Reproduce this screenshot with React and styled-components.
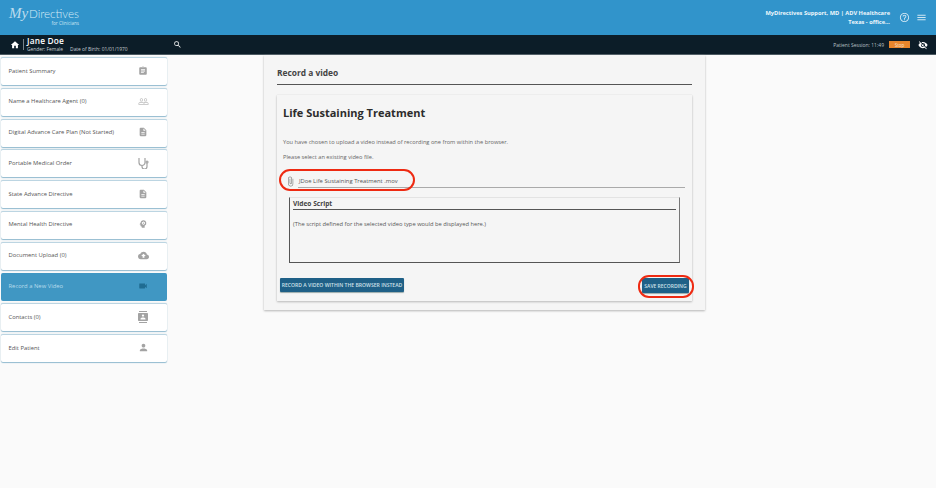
import React from "react";
import styled, { createGlobalStyle } from "styled-components";
import {
  MdAssignment, MdPeopleOutline, MdDescription, MdCloudUpload, MdVideocam, MdContacts,
  MdPerson, MdHome, MdSearch, MdHelpOutline, MdMenu, MdVisibilityOff, MdAttachFile, MdPsychology,
} from "react-icons/md";

const Global = createGlobalStyle`
  html, body { margin: 0; padding: 0; background: #fafafa; }
  body { font-family: "Open Sans", "Liberation Sans", sans-serif; width: 936px; height: 488px; overflow: hidden; }
`;

const Header = styled.header`
  height: 35px; background: #3194cb; display: flex; align-items: center; justify-content: space-between;
  padding: 0 9px 0 10px; box-sizing: border-box; color: #fff;
`;
const Logo = styled.div`display: flex; flex-direction: column; align-items: flex-end; width: 69px; margin-top: -3px; color: #d8ecf7;`;
const LogoMain = styled.div`display: flex; align-items: baseline; font-size: 11.6px; line-height: 13px; font-family: "Lato", sans-serif; font-weight: 300; white-space: nowrap;`;
const LogoScript = styled.span`font-family: "Liberation Serif", serif; font-style: italic; font-size: 15px; margin-right: 1px; color: #bcdcee;`;
const LogoSub = styled.div`font-size: 4.6px; line-height: 6px; white-space: nowrap; color: #cde5f3;`;
const UserArea = styled.div`display: flex; align-items: center; gap: 6px;`;
const UserText = styled.div`text-align: right; font-size: 5.7px; line-height: 8.5px; font-weight: 700; color: #eef7fc; margin-right: 3px;`;
const HeadIcon = styled.span`display: flex; color: #cfe6f3; font-size: ${p => p.$size || 11}px;`;

const PatientBar = styled.div`
  height: 20px; background: #0c1d28; display: flex; align-items: center; color: #fff; padding: 0 8px 0 10px;
  box-sizing: border-box; border-bottom: 1px solid #4c5a62;
`;
const HomeBtn = styled.span`display: flex; font-size: 10px; padding-right: 2px; margin-right: 1px;`;
const Divider = styled.span`width: 1px; height: 11px; background: #77838a; margin-right: 3px;`;
const Patient = styled.div`display: flex; flex-direction: column; width: 142px;`;
const PatientName = styled.div`font-size: 8.3px; line-height: 8px; font-weight: 600; letter-spacing: 0.2px;`;
const PatientMeta = styled.div`font-size: 4.9px; line-height: 6px; color: #c5ccd0; white-space: nowrap; display: flex; gap: 7px; margin-top: 1px;`;
const SearchIcon = styled.span`display: flex; font-size: 9px; margin-left: 4px;`;
const Session = styled.div`margin-left: auto; display: flex; align-items: center; gap: 5px; font-size: 5px; color: #b9c1c6;`;
const Stop = styled.span`
  width: 21px; height: 7px; background: #e8862c; color: #f9e4cf; font-size: 4.6px; display: flex; align-items: center; justify-content: center;
`;
const EyeIcon = styled.span`display: flex; font-size: 10px; color: #fff; margin-left: 3px;`;

const Body = styled.div`display: flex; align-items: flex-start;`;
const Sidebar = styled.nav`width: 166px; margin: 2px 0 0 1px; display: flex; flex-direction: column; gap: 2.8px; flex: none;`;
const Item = styled.div`
  height: 28px; box-sizing: border-box; display: flex; align-items: center; justify-content: space-between;
  padding: 0 18px 2px 7.5px; background: ${p => (p.$active ? "#4097c3" : "#fff")}; color: ${p => (p.$active ? "#b9dbec" : "#555")};
  border-radius: 2px; font-size: 5.85px; box-shadow: ${p => (p.$active ? "none" : "0 0 1px #a8c5d5, 0 1px 1px #8fb9cf")};
  border-top: 1px solid ${p => (p.$active ? "#4097c3" : "#bcd5e2")};
`;
const ItemIcon = styled.span`
  display: flex; width: 12px; justify-content: center; font-size: ${p => p.$size || 10}px; color: ${p => (p.$active ? "#1f6c92" : p.$soft ? "#bdbdbd" : "#a3a3a3")};
`;

const Panel = styled.main`
  width: 441px; height: 255px; margin-left: 97px; box-sizing: border-box; background: #f5f5f5; padding: 13px 13px 0 13px;
  box-shadow: 0 1px 2px #b5b5b5; flex: none;
`;
const PanelTitle = styled.div`
  font-size: 8.4px; font-weight: 700; color: #444; line-height: 10px; padding-bottom: 6px; border-bottom: 1px solid #555; height: 10px;
`;
const Card = styled.section`
  margin-top: 10px; height: 206px; box-sizing: border-box; padding: 9px 3px 0 6px; background: #f5f5f5; box-shadow: 0 1px 2px #b9b9b9, 0 0 1px #e2e2e2;
  display: flex; flex-direction: column; position: relative;
`;
const CardTitle = styled.h2`margin: 0; font-size: 11px; line-height: 17px; color: #2c2c2c; font-weight: 700;`;
const Para = styled.p`margin: 17px 0 0; font-size: 5.68px; line-height: 8px; color: #666; & + & { margin-top: 7px; }`;
const Field = styled.div`display: flex; align-items: center; margin-top: 13px; margin-right: 4px; height: 14px;`;
const ClipIcon = styled.span`display: flex; font-size: 11px; color: #888; width: 15px; justify-content: center;`;
const FieldText = styled.div`
  flex: 1; font-size: 5.85px; color: #555; line-height: 12px; border-bottom: 1px solid #aaa; height: 13px; box-sizing: border-box; padding-left: 1px;
`;
const ScriptBox = styled.div`
  margin: 9px 9px 0 6px; height: 66px; box-sizing: border-box; border: 1px solid #555; border-top: 1px solid #e3e3e3; border-right-color: #777; padding: 0 3px;
`;
const ScriptTitle = styled.div`font-size: 6.6px; font-weight: 700; line-height: 11px; height: 12px; box-sizing: border-box; color: #444; border-bottom: 1px solid #555;`;
const ScriptText = styled.p`margin: 10px 0 0; font-size: 5.78px; line-height: 8px; color: #555;`;
const Actions = styled.div`display: flex; justify-content: space-between; align-items: center; margin: 13px 0 0 -3px;`;
const Btn = styled.button`
  height: ${p => p.$h}px; width: ${p => p.$w}px; background: #1f6087; color: #cfe0ea; border: none; border-radius: 1px; padding: 0;
  font-family: inherit; font-size: ${p => p.$fs}px; font-weight: 600; white-space: nowrap; box-shadow: 0 1px 1px #9aa;
  margin-top: ${p => p.$mt || 0}px;
`;
const Highlight = styled.div`
  position: absolute; box-sizing: border-box; border: 2px solid #ee2a12; pointer-events: none; border-radius: 11px;
  left: ${p => p.$l}px; top: ${p => p.$t}px; width: ${p => p.$w}px; height: ${p => p.$h}px;
`;

const Scope = () => (
  <svg width="11" height="12" viewBox="0 0 11 12" fill="none" stroke="currentColor" strokeWidth="1.2">
    <path d="M1 1v4.5a3 3 0 0 0 6 0V1" />
    <path d="M4 8.5v1a1.5 1.5 0 0 0 5 0V6" />
    <circle cx="9" cy="5" r="1" />
  </svg>
);

const items = [
  ["Patient Summary", <MdAssignment />, 10],
  ["Name a Healthcare Agent (0)", <MdPeopleOutline />, 11, false, true],
  ["Digital Advance Care Plan (Not Started)", <MdDescription />, 10],
  ["Portable Medical Order", <Scope />, 11],
  ["State Advance Directive", <MdDescription />, 10],
  ["Mental Health Directive", <MdPsychology />, 10],
  ["Document Upload (0)", <MdCloudUpload />, 11],
  ["Record a New Video", <MdVideocam />, 10, true],
  ["Contacts (0)", <MdContacts />, 12],
  ["Edit Patient", <MdPerson />, 11],
];

export default function App() {
  return (
    <>
      <Global />
      <Header>
        <Logo>
          <LogoMain><LogoScript>My</LogoScript>Directives</LogoMain>
          <LogoSub>for Clinicians</LogoSub>
        </Logo>
        <UserArea>
          <UserText>
            MyDirectives Support, MD | ADV Healthcare<br />Texas - office...
          </UserText>
          <HeadIcon $size={11}><MdHelpOutline /></HeadIcon>
          <HeadIcon $size={11}><MdMenu /></HeadIcon>
        </UserArea>
      </Header>
      <PatientBar>
        <HomeBtn><MdHome /></HomeBtn>
        <Divider />
        <Patient>
          <PatientName>Jane Doe</PatientName>
          <PatientMeta><span>Gender: Female</span><span>Date of Birth: 01/01/1970</span></PatientMeta>
        </Patient>
        <SearchIcon><MdSearch /></SearchIcon>
        <Session>
          Patient Session: 11:49
          <Stop>Stop</Stop>
          <EyeIcon><MdVisibilityOff /></EyeIcon>
        </Session>
      </PatientBar>
      <Body>
        <Sidebar>
          {items.map(([label, icon, size, active, soft]) => (
            <Item key={label} $active={active}>
              {label}
              <ItemIcon $size={size} $active={active} $soft={soft}>{icon}</ItemIcon>
            </Item>
          ))}
        </Sidebar>
        <Panel>
          <PanelTitle>Record a video</PanelTitle>
          <Card>
            <CardTitle>Life Sustaining Treatment</CardTitle>
            <Para>You have chosen to upload a video instead of recording one from within the browser.</Para>
            <Para>Please select an existing video file.</Para>
            <Field>
              <ClipIcon><MdAttachFile /></ClipIcon>
              <FieldText>JDoe Life Sustaining Treatment .mov</FieldText>
            </Field>
            <ScriptBox>
              <ScriptTitle>Video Script</ScriptTitle>
              <ScriptText>(The script defined for the selected video type would be displayed here.)</ScriptText>
            </ScriptBox>
            <Actions>
              <Btn $w={124} $h={14} $fs={5.1}>RECORD A VIDEO WITHIN THE BROWSER INSTEAD</Btn>
              <Btn $w={47} $h={15} $mt={2} $fs={5}>SAVE RECORDING</Btn>
            </Actions>
            <Highlight $l={2} $t={74} $w={136} $h={22} />
            <Highlight $l={361} $t={180} $w={56} $h={23} />
          </Card>
        </Panel>
      </Body>
    </>
  );
}
